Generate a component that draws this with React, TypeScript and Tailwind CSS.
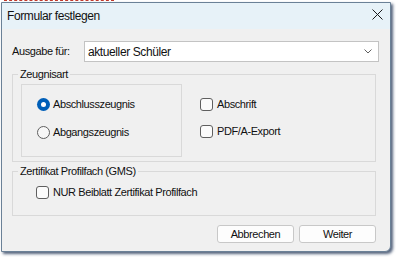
const Radio = ({ checked, label }: { checked?: boolean; label: string }) => (
  <div className="flex items-center h-[14px] gap-[3px]">
    {checked ? (
      <span className="w-[13px] h-[13px] rounded-full bg-[#005fb8] flex items-center justify-center">
        <span className="w-[5px] h-[5px] rounded-full bg-white" />
      </span>
    ) : (
      <span className="w-[13px] h-[13px] rounded-full border border-[#5f5f5f] bg-[#f7f7f7]" />
    )}
    <span>{label}</span>
  </div>
);

const Check = ({ label }: { label: string }) => (
  <div className="flex items-center h-[14px] gap-[4px]">
    <span className="w-[13px] h-[13px] rounded-[3px] border border-[#5f5f5f] bg-[#fbfbfb]" />
    <span>{label}</span>
  </div>
);

export default function App() {
  return (
    <div className="w-[399px] h-[261px] bg-white font-['Liberation_Sans',Arial,sans-serif] text-[11px] tracking-[-0.4px] text-[#111]">
      <div className="h-[2px] ml-[4px] w-[110px] border-t border-dashed border-[#c0392b]" />
      <div className="ml-[1px] w-[390px] h-[250px] flex flex-col border border-[#6b8197] rounded-br-[6px] overflow-hidden bg-[#f0f0f0] shadow-[2px_2px_3px_rgba(25,45,80,0.75)]">
        {/* title bar */}
        <div className="h-[26px] flex items-center justify-between bg-[#e7f2f8] pl-[5px] pr-[7px] text-[12px]">
          <span>Formular festlegen</span>
          <svg width="11" height="11" viewBox="0 0 11 11" className="-mt-[4px]">
            <path d="M0.5 0.5 L10.5 10.5 M10.5 0.5 L0.5 10.5" stroke="#1a1a1a" strokeWidth="1" />
          </svg>
        </div>

        {/* body */}
        <div className="flex flex-col pl-[10px] pr-[11px]">
          <div className="flex items-center mt-[12px] h-[21px]">
            <span className="w-[72px]">Ausgabe für:</span>
            <div className="flex-1 h-[21px] bg-white border border-[#c3c3c3] flex items-center justify-between pl-[3px] pr-[6px]">
              <span className="text-[12px]">aktueller Schüler</span>
              <svg width="8" height="5" viewBox="0 0 8 5">
                <path d="M0.5 0.5 L4 4 L7.5 0.5" fill="none" stroke="#606060" strokeWidth="1" />
              </svg>
            </div>
          </div>

          <fieldset className="mt-[6px] mr-[3px] border border-[#d9d9d9] pl-[5px] pb-[4px]">
            <legend className="px-[2px] leading-[13px]">Zeugnisart</legend>
            <div className="flex items-start">
              <div className="ml-[3px] mt-[3px] w-[161px] h-[73px] border border-[#d9d9d9] flex flex-col gap-[14px] pl-[15px] pt-[12px]">
                <Radio checked label="Abschlusszeugnis" />
                <Radio label="Abgangszeugnis" />
              </div>
              <div className="ml-[18px] pt-[16px] flex flex-col gap-[13px]">
                <Check label="Abschrift" />
                <Check label="PDF/A-Export" />
              </div>
            </div>
          </fieldset>

          <fieldset className="mt-[3px] mr-[3px] border border-[#d9d9d9] pl-[5px]">
            <legend className="px-[2px] leading-[13px]">Zertifikat Profilfach (GMS)</legend>
            <div className="pl-[18px] pt-[7px] pb-[16px]">
              <Check label="NUR Beiblatt Zertifikat Profilfach" />
            </div>
          </fieldset>

          <div className="flex justify-end gap-[5px] mt-[9px] mr-[3px]">
            <button className="w-[77px] h-[18px] bg-[#fdfdfd] border border-[#c8c8c8] rounded-[3px] leading-none">Abbrechen</button>
            <button className="w-[77px] h-[18px] bg-[#fdfdfd] border border-[#c8c8c8] rounded-[3px] leading-none">Weiter</button>
          </div>
        </div>
      </div>
    </div>
  );
}
